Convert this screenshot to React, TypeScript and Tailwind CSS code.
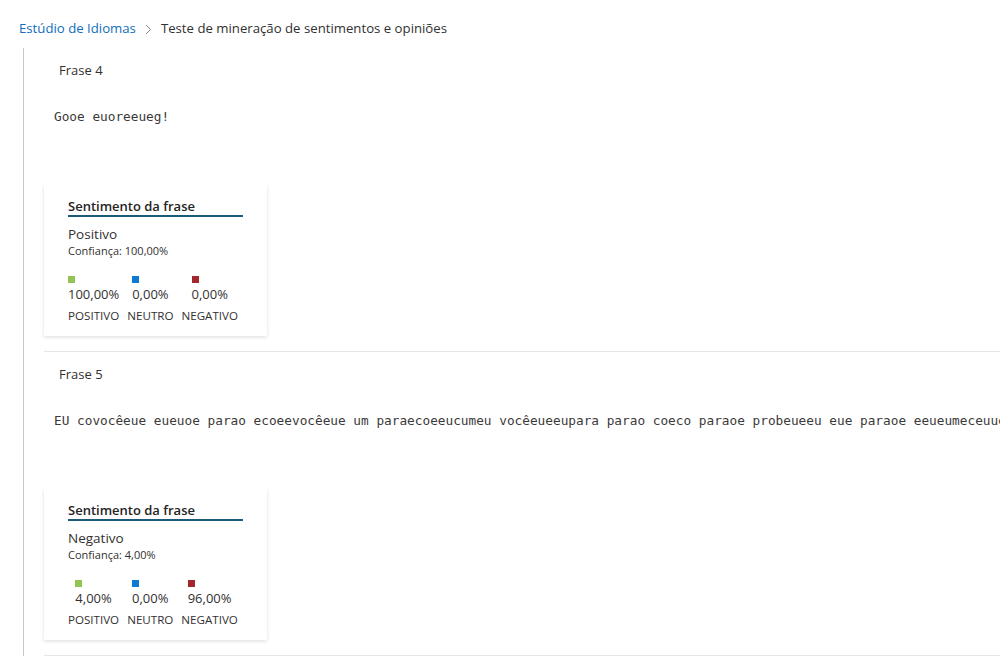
import React from "react";

type Frase = {
  n: number;
  text: string;
  label: string;
  conf: string;
  pos: string;
  neu: string;
  neg: string;
};

const frases: Frase[] = [
  {
    n: 4,
    text: "Gooe euoreeueg!",
    label: "Positivo",
    conf: "100,00%",
    pos: "100,00%",
    neu: "0,00%",
    neg: "0,00%",
  },
  {
    n: 5,
    text: "EU covocêeue eueuoe parao ecoeevocêeue um paraecoeeucumeu vocêeueeupara parao coeco paraoe probeueeu eue paraoe eeueumeceuueu eue",
    label: "Negativo",
    conf: "4,00%",
    pos: "4,00%",
    neu: "0,00%",
    neg: "96,00%",
  },
];

// one column of the score row: coloured square + value, centred over the label
const Score = ({ color, value, name }: { color: string; value: string; name: string }) => (
  <div className="flex flex-col items-center">
    <div className="flex flex-col items-start">
      <div className={`w-[7px] h-[7px] ${color}`} />
      <div className="mt-[3px] text-[13px] leading-[16px]">{value}</div>
    </div>
    <div className="mt-[7px] text-[11.6px] leading-[14px]">{name}</div>
  </div>
);

const Card = ({ f }: { f: Frase }) => (
  <div className="w-[223px] bg-white pt-[13px] pb-[13px] px-[24px] shadow-[0_1.6px_3.6px_rgba(0,0,0,0.13),0_0.3px_0.9px_rgba(0,0,0,0.11)]">
    <div className="w-[175px] border-b-2 border-[#1d5a78] text-[13px] leading-[18px] font-semibold text-[#252423]">
      Sentimento da frase
    </div>
    <div className="mt-[8px] text-[13.5px] leading-[18px]">{f.label}</div>
    <div className="mt-[1px] text-[11px] leading-[14px]">Confiança: {f.conf}</div>
    <div className="mt-[18px] flex gap-[8px]">
      <Score color="bg-[#92c353]" value={f.pos} name="POSITIVO" />
      <Score color="bg-[#0f78d4]" value={f.neu} name="NEUTRO" />
      <Score color="bg-[#a4262c]" value={f.neg} name="NEGATIVO" />
    </div>
  </div>
);

export default function App() {
  return (
    <div
      className="w-[1000px] h-[656px] overflow-hidden bg-white text-[#323130]"
      style={{ fontFamily: '"Segoe UI", "Open Sans", sans-serif' }}
    >
      {/* breadcrumb */}
      <div className="flex items-center h-[20px] mt-[19px] pl-[19px] text-[13.2px]">
        <span className="text-[#106ebe]">Estúdio de Idiomas</span>
        <svg className="mx-[9px]" width="7" height="11" viewBox="0 0 7 11">
          <polyline points="1,1 5.5,5.5 1,10" fill="none" stroke="#8a8886" strokeWidth="1" />
        </svg>
        <span>Teste de mineração de sentimentos e opiniões</span>
      </div>

      <div className="ml-[23px] mt-[9px] border-l border-[#c8c6c4] pl-[20px]">
        {frases.map((f) => (
          <div key={f.n} className="pt-[12px] pb-[15px] border-b border-[#e6e6e6]">
            <div className="pl-[15px] text-[13px] leading-[20px]">Frase {f.n}</div>
            <div
              className="mt-[28px] pl-[10px] text-[12.75px] leading-[18px] whitespace-nowrap overflow-hidden text-[#3b3a39]"
              style={{ fontFamily: '"DejaVu Sans Mono", monospace' }}
            >
              {f.text}
            </div>
            <div className="mt-[58px]">
              <Card f={f} />
            </div>
          </div>
        ))}
      </div>
    </div>
  );
}
